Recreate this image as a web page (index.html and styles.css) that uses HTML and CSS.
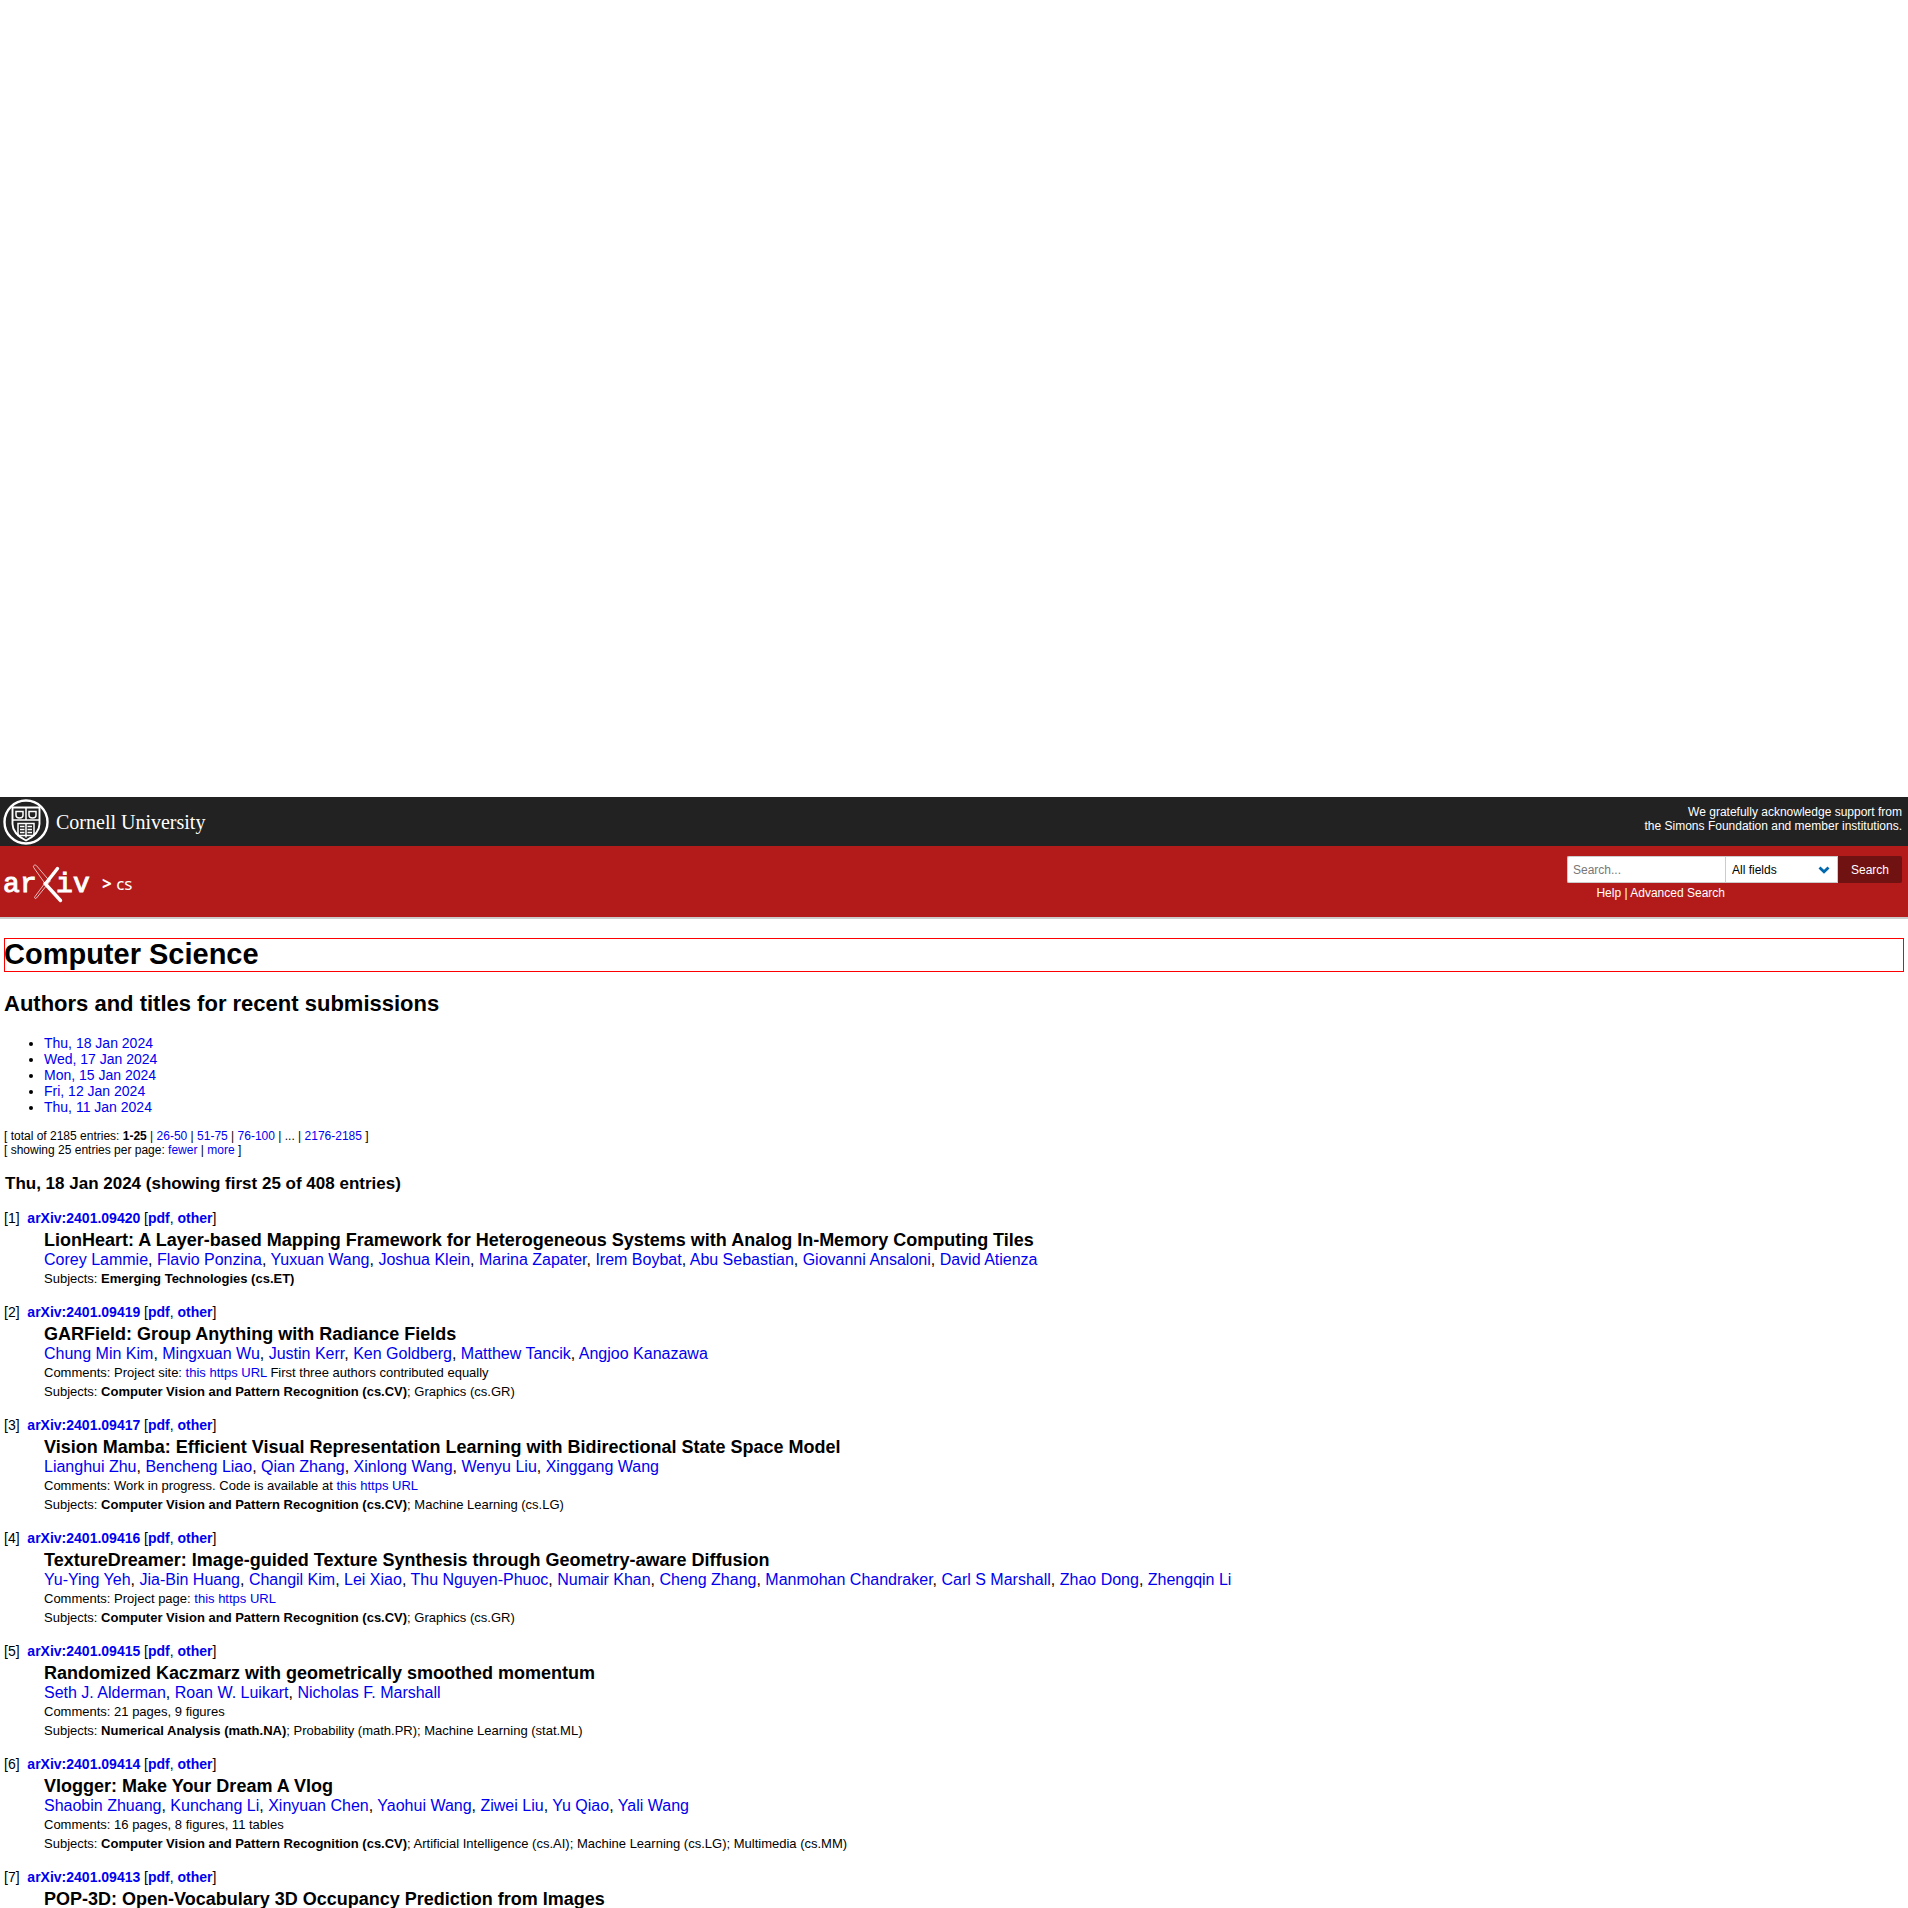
FILE: index.html
```html
<!DOCTYPE html>
<html lang="en">
<head>
<meta charset="utf-8">
<title>Computer Science authors and titles for recent submissions</title>
<link rel="stylesheet" href="styles.css">
</head>
<body>
<div class="spacer"></div>
<header>
  <div class="cornell">
    <a class="cornell-brand" href="#">
      <svg class="seal" viewBox="0 0 46 46" fill="none" stroke="#fff" aria-hidden="true">
        <circle cx="23" cy="23" r="21.500" stroke-width="2.400"/>
        <path d="M9.500 8.500h27v16.500c0 7-5.500 12.500-13.500 16.500-8-4-13.500-9.500-13.500-16.500z" stroke-width="1.900"/>
        <path d="M10 21h26M23 9v12" stroke-width="1.500"/>
        <path d="M13 12.500h7v3.500c0 2-1.500 3-3.500 3s-3.500-1-3.500-3zM26 12.500h7v3.500c0 2-1.500 3-3.500 3s-3.500-1-3.500-3z" stroke-width="1.500"/>
        <path d="M15 24.500h16v12H15zM23 24.500v14M17 27.500h4.500M17 30.500h4.500M17 33.500h4.500M24.500 27.500h4.500M24.500 30.500h4.500M24.500 33.500h4.500" stroke-width="1.500"/>
      </svg>
      <span>Cornell University</span>
    </a>
    <p class="support"><a href="#">We gratefully acknowledge support from<br>the Simons Foundation and member institutions.</a></p>
  </div>
  <div class="banner">
    <div class="crumbs">
      <a href="#" aria-label="arXiv">
        <svg class="logo" viewBox="0 0 87 40" aria-hidden="true">
          <g class="logo-text"><text x="0" y="28">a</text><text x="17" y="28">r</text><text x="53" y="28">i</text><text x="70" y="28">v</text></g>
          <path d="M47.500 16.500 33.500 34c-1 1.200-2.500 0-1.700-1.200L42 19" fill="none" stroke="#fff" stroke-width=".7"/>
          <path d="M47 17.500 33.500 1.700c-1.500-1.500-4-.2-2.700 2L42 19.500" fill="none" stroke="#fff" stroke-width=".7"/>
          <path d="M43.500 18.500 54.500 4.500M42 19.500l15.500 17" fill="none" stroke="#fff" stroke-width="3.400" stroke-linecap="round"/>
        </svg>
      </a>
      <span class="crumb"><b>&gt;</b> <a href="#">cs</a></span>
    </div>
    <form class="search">
      <div class="fields">
        <input type="text" placeholder="Search..." aria-label="Search term">
        <div class="select">
          <select aria-label="Field to search"><option>All fields</option></select>
          <svg viewBox="0 0 12 8" aria-hidden="true"><path d="M1.500 1.500 6 5.800l4.500-4.300" fill="none" stroke="#0068ac" stroke-width="2.800"/></svg>
        </div>
        <button type="button">Search</button>
      </div>
      <p class="help"><a href="#">Help</a> | <a href="#">Advanced Search</a></p>
    </form>
  </div>
</header>
<main>
  <h1>Computer Science</h1>
  <h2>Authors and titles for recent submissions</h2>
  <ul class="days">
    <li><a href="#">Thu, 18 Jan 2024</a></li>
    <li><a href="#">Wed, 17 Jan 2024</a></li>
    <li><a href="#">Mon, 15 Jan 2024</a></li>
    <li><a href="#">Fri, 12 Jan 2024</a></li>
    <li><a href="#">Thu, 11 Jan 2024</a></li>
  </ul>
  <div class="paging">
    <div>[ total of 2185 entries: <b>1-25</b> | <a href="#">26-50</a> | <a href="#">51-75</a> | <a href="#">76-100</a> | ... | <a href="#">2176-2185</a> ]</div>
    <div>[ showing 25 entries per page: <a href="#">fewer</a> | <a href="#">more</a> ]</div>
  </div>
  <h3>Thu, 18 Jan 2024 (showing first 25 of 408 entries)</h3>
  <dl>
    <dt>[1]&nbsp; <b><a href="#">arXiv:2401.09420</a></b> [<b><a href="#">pdf</a></b>, <b><a href="#">other</a></b>]</dt>
    <dd>
      <div class="title">LionHeart: A Layer-based Mapping Framework for Heterogeneous Systems with Analog In-Memory Computing Tiles</div>
      <div class="authors"><a href="#">Corey Lammie</a>, <a href="#">Flavio Ponzina</a>, <a href="#">Yuxuan Wang</a>, <a href="#">Joshua Klein</a>, <a href="#">Marina Zapater</a>, <a href="#">Irem Boybat</a>, <a href="#">Abu Sebastian</a>, <a href="#">Giovanni Ansaloni</a>, <a href="#">David Atienza</a></div>
      <div class="note">Subjects: <b>Emerging Technologies (cs.ET)</b></div>
    </dd>
    <dt>[2]&nbsp; <b><a href="#">arXiv:2401.09419</a></b> [<b><a href="#">pdf</a></b>, <b><a href="#">other</a></b>]</dt>
    <dd>
      <div class="title">GARField: Group Anything with Radiance Fields</div>
      <div class="authors"><a href="#">Chung Min Kim</a>, <a href="#">Mingxuan Wu</a>, <a href="#">Justin Kerr</a>, <a href="#">Ken Goldberg</a>, <a href="#">Matthew Tancik</a>, <a href="#">Angjoo Kanazawa</a></div>
      <div class="note">Comments: Project site: <a href="#">this https URL</a> First three authors contributed equally</div>
      <div class="note">Subjects: <b>Computer Vision and Pattern Recognition (cs.CV)</b>; Graphics (cs.GR)</div>
    </dd>
    <dt>[3]&nbsp; <b><a href="#">arXiv:2401.09417</a></b> [<b><a href="#">pdf</a></b>, <b><a href="#">other</a></b>]</dt>
    <dd>
      <div class="title">Vision Mamba: Efficient Visual Representation Learning with Bidirectional State Space Model</div>
      <div class="authors"><a href="#">Lianghui Zhu</a>, <a href="#">Bencheng Liao</a>, <a href="#">Qian Zhang</a>, <a href="#">Xinlong Wang</a>, <a href="#">Wenyu Liu</a>, <a href="#">Xinggang Wang</a></div>
      <div class="note">Comments: Work in progress. Code is available at <a href="#">this https URL</a></div>
      <div class="note">Subjects: <b>Computer Vision and Pattern Recognition (cs.CV)</b>; Machine Learning (cs.LG)</div>
    </dd>
    <dt>[4]&nbsp; <b><a href="#">arXiv:2401.09416</a></b> [<b><a href="#">pdf</a></b>, <b><a href="#">other</a></b>]</dt>
    <dd>
      <div class="title">TextureDreamer: Image-guided Texture Synthesis through Geometry-aware Diffusion</div>
      <div class="authors"><a href="#">Yu-Ying Yeh</a>, <a href="#">Jia-Bin Huang</a>, <a href="#">Changil Kim</a>, <a href="#">Lei Xiao</a>, <a href="#">Thu Nguyen-Phuoc</a>, <a href="#">Numair Khan</a>, <a href="#">Cheng Zhang</a>, <a href="#">Manmohan Chandraker</a>, <a href="#">Carl S Marshall</a>, <a href="#">Zhao Dong</a>, <a href="#">Zhengqin Li</a></div>
      <div class="note">Comments: Project page: <a href="#">this https URL</a></div>
      <div class="note">Subjects: <b>Computer Vision and Pattern Recognition (cs.CV)</b>; Graphics (cs.GR)</div>
    </dd>
    <dt>[5]&nbsp; <b><a href="#">arXiv:2401.09415</a></b> [<b><a href="#">pdf</a></b>, <b><a href="#">other</a></b>]</dt>
    <dd>
      <div class="title">Randomized Kaczmarz with geometrically smoothed momentum</div>
      <div class="authors"><a href="#">Seth J. Alderman</a>, <a href="#">Roan W. Luikart</a>, <a href="#">Nicholas F. Marshall</a></div>
      <div class="note">Comments: 21 pages, 9 figures</div>
      <div class="note">Subjects: <b>Numerical Analysis (math.NA)</b>; Probability (math.PR); Machine Learning (stat.ML)</div>
    </dd>
    <dt>[6]&nbsp; <b><a href="#">arXiv:2401.09414</a></b> [<b><a href="#">pdf</a></b>, <b><a href="#">other</a></b>]</dt>
    <dd>
      <div class="title">Vlogger: Make Your Dream A Vlog</div>
      <div class="authors"><a href="#">Shaobin Zhuang</a>, <a href="#">Kunchang Li</a>, <a href="#">Xinyuan Chen</a>, <a href="#">Yaohui Wang</a>, <a href="#">Ziwei Liu</a>, <a href="#">Yu Qiao</a>, <a href="#">Yali Wang</a></div>
      <div class="note">Comments: 16 pages, 8 figures, 11 tables</div>
      <div class="note">Subjects: <b>Computer Vision and Pattern Recognition (cs.CV)</b>; Artificial Intelligence (cs.AI); Machine Learning (cs.LG); Multimedia (cs.MM)</div>
    </dd>
    <dt>[7]&nbsp; <b><a href="#">arXiv:2401.09413</a></b> [<b><a href="#">pdf</a></b>, <b><a href="#">other</a></b>]</dt>
    <dd>
      <div class="title">POP-3D: Open-Vocabulary 3D Occupancy Prediction from Images</div>
    </dd>
  </dl>
</main>
</body>
</html>
```
FILE: styles.css
```css
* { box-sizing: border-box; }
body {
  margin: 0;
  background: #fff;
  color: #000;
  font: 14px/16px "Liberation Sans", Arial, sans-serif;
}
a { color: #00e; text-decoration: none; }
p { margin: 0; }
.spacer { height: 797px; }

.cornell {
  display: flex;
  justify-content: space-between;
  align-items: center;
  height: 49px;
  padding: 0 6px 0 3px;
  background: #222;
}
.cornell-brand {
  display: flex;
  align-items: center;
  gap: 7px;
  color: #fff;
  font: 20px/24px "Liberation Serif", serif;
}
.seal { width: 46px; height: 46px; }
.support { font-size: 12px; line-height: 14px; text-align: right; padding-bottom: 6px; }
.support a, .banner a { color: #fff; }

.banner {
  display: flex;
  justify-content: space-between;
  align-items: flex-start;
  height: 73px;
  padding: 10px 6px 0 3px;
  background: #b31b1b;
  border-bottom: 2px solid #ccc;
  color: #fff;
}
.crumbs { display: flex; align-items: center; gap: 12px; padding-top: 8px; }
.logo { display: block; width: 87px; height: 40px; }
.logo-text { fill: #fff; stroke: #fff; stroke-width: 1px; font: 28px "Liberation Mono", monospace; }
.crumb { font: 17px/24px "Noto Sans", sans-serif; }

.fields { display: flex; height: 27px; }
.fields input, .fields select {
  height: 27px;
  padding: 0 5px;
  border: 1px solid #ccc;
  background: #fff;
  color: #000;
  font: 12px "Liberation Sans", Arial, sans-serif;
}
.fields input { width: 158px; border-radius: 2px 0 0 2px; border-right: 0; }
.fields input::placeholder { color: #777; }
.select { display: grid; align-items: center; width: 113px; }
.select select { grid-area: 1 / 1; width: 100%; padding: 0 6px; appearance: none; border-radius: 0; }
.select svg { grid-area: 1 / 1; justify-self: end; width: 12px; height: 8px; margin-right: 8px; pointer-events: none; }
.fields button {
  width: 64px;
  padding: 0;
  border: 0;
  border-radius: 0 2px 2px 0;
  background: #701112;
  color: #fff;
  font: 12px "Liberation Sans", Arial, sans-serif;
}
.help { width: 158px; padding-top: 3px; font-size: 12px; line-height: 14px; text-align: right; }

main { padding: 19px 4px 0; }
h1, h2, h3 { margin: 0; }
h1 { padding-bottom: 2px; outline: 1px solid #f00; outline-offset: -1px; font-size: 29px; line-height: 32px; }
h2 { margin-top: 19px; font-size: 22px; line-height: 26px; }
.days { margin: 18px 0 14px; padding-left: 40px; }
.paging { font-size: 12px; line-height: 14px; }
h3 { margin-top: 18px; padding-left: 1px; font-size: 17px; line-height: 18px; }
dl { margin: 15px 0 0; }
dt { line-height: 20px; }
dd { margin: 1px 0 14px 40px; }
.title { font-size: 18px; font-weight: bold; line-height: 22px; }
.authors { font-size: 16px; line-height: 18px; }
.note { font-size: 13px; line-height: 19px; }
```
